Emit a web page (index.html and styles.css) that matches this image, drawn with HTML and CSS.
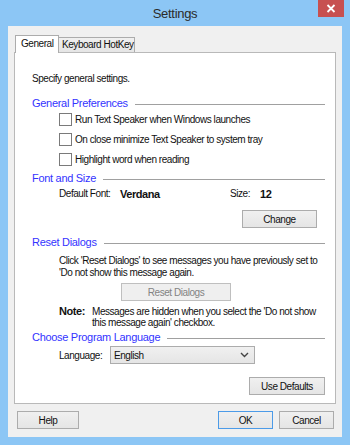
FILE: index.html
```html
<!DOCTYPE html>
<html lang="en">
<head>
    <meta charset="UTF-8">
    <title>Settings</title>
    <link rel="stylesheet" href="styles.css">
</head>
<body>
    <div class="window">
        <div class="titlebar">
            <span class="title">Settings</span>
            <div class="close">
                <svg width="10" height="9" viewBox="0 0 10 9"><path d="M1.5 1 L8.5 8 M8.5 1 L1.5 8" stroke="#fff" stroke-width="1.8" fill="none"/></svg>
            </div>
        </div>

        <div class="client">
            <div class="tabs">
                <div class="tab active">General</div>
                <div class="tab second">Keyboard HotKey</div>
            </div>

            <div class="panel">
                <p class="intro">Specify general settings.</p>

                <div class="group-title g1"><span>General Preferences</span></div>
                <div class="check"><span class="box"></span>Run Text Speaker when Windows launches</div>
                <div class="check"><span class="box"></span>On close minimize Text Speaker to system tray</div>
                <div class="check"><span class="box"></span>Highlight word when reading</div>

                <div class="group-title g2"><span>Font and Size</span></div>
                <div class="font-row">
                    <span class="font-label">Default Font:</span>
                    <span class="font-value">Verdana</span>
                    <span class="size-label">Size:</span>
                    <span class="size-value">12</span>
                </div>
                <div class="right-row change-row">
                    <div class="btn change">Change</div>
                </div>

                <div class="group-title g3"><span>Reset Dialogs</span></div>
                <p class="indent text2">Click 'Reset Dialogs' to see messages you have previously set to<br>'Do not show this message again.</p>
                <div class="btn disabled reset">Reset Dialogs</div>
                <div class="note">
                    <span class="note-label">Note:</span>
                    <span class="note-text">Messages are hidden when you select the 'Do not show<br>this message again' checkbox.</span>
                </div>

                <div class="group-title g4"><span>Choose Program Language</span></div>
                <div class="lang-row">
                    <span class="lang-label">Language:</span>
                    <div class="select">
                        <span>English</span>
                        <svg width="9" height="6" viewBox="0 0 9 6"><path d="M1 1 L4.5 4.5 L8 1" stroke="#444" stroke-width="1.4" fill="none"/></svg>
                    </div>
                </div>
                <div class="right-row defaults-row">
                    <div class="btn defaults">Use Defaults</div>
                </div>
            </div>

            <div class="footer">
                <div class="btn help">Help</div>
                <div class="btn ok">OK</div>
                <div class="btn cancel">Cancel</div>
            </div>
        </div>
    </div>
</body>
</html>
```

FILE: styles.css
```css
* {
    margin: 0;
    padding: 0;
    box-sizing: border-box;
}

body {
    font-family: 'Liberation Sans', Arial, sans-serif;
    font-size: 10px;
    letter-spacing: -0.45px;
    color: #111111;
    background-color: #8cc6f5;
    white-space: nowrap;
}

.window {
    width: 350px;
    height: 445px;
    background-color: #8cc6f5;
    padding: 0 8px 8px 8px;
    display: flex;
    flex-direction: column;
}

.titlebar {
    height: 26px;
    position: relative;
    display: flex;
    align-items: center;
    justify-content: center;
}

.title {
    font-size: 13px;
    letter-spacing: -0.3px;
    color: #2b2b2b;
    margin-top: 1px;
}

.close {
    position: absolute;
    top: 0;
    right: -2px;
    width: 26px;
    height: 17px;
    background-color: #c75050;
    display: flex;
    align-items: center;
    justify-content: center;
}

.client {
    flex: 1;
    background-color: #f0f0f0;
    padding: 9px 6px 0 6px;
    display: flex;
    flex-direction: column;
}

.tabs {
    display: flex;
    align-items: flex-end;
    height: 17px;
    padding-left: 1px;
}

.tab {
    height: 15px;
    border: 1px solid #acacac;
    border-bottom: none;
    background: linear-gradient(#f0f0f0, #e5e5e5);
    line-height: 14px;
    padding-left: 3px;
}

.tab.active {
    width: 44px;
    height: 18px;
    margin-bottom: -1px;
    background: #ffffff;
    padding-left: 5px;
    line-height: 15px;
    position: relative;
    z-index: 1;
}

.tab.second {
    width: 77px;
    margin-left: -1px;
}

.panel {
    height: 352px;
    background-color: #ffffff;
    border: 1px solid #b9b9b9;
    padding: 0 10px 0 17px;
}

.intro {
    margin-top: 19px;
    line-height: 13px;
}

.group-title {
    display: flex;
    align-items: center;
    height: 12px;
    font-size: 11px;
    letter-spacing: -0.3px;
    color: #3333ff;
}

.group-title::after {
    content: "";
    flex: 1;
    height: 1px;
    background-color: #a0a0a0;
    margin-left: 7px;
    margin-top: 2px;
}

.g1 { margin-top: 12px; }
.g2 { margin-top: 3px; }
.g3 { margin-top: 8px; }
.g4 { margin-top: 3px; }

.check {
    height: 20px;
    display: flex;
    align-items: center;
    padding-left: 27px;
}

.box {
    width: 13px;
    height: 13px;
    border: 1px solid #7a7a7a;
    background-color: #ffffff;
    margin-right: 3px;
}

.font-row {
    margin-top: 3px;
    height: 14px;
    line-height: 14px;
    display: flex;
    padding-left: 27px;
}

.font-label { width: 61px; }
.font-value { width: 110px; font-weight: bold; font-size: 11px; }
.size-label { width: 30px; }
.size-value { font-weight: bold; font-size: 11px; }

.right-row {
    display: flex;
    justify-content: flex-end;
}

.change-row {
    margin-top: 9px;
    padding-right: 8px;
}

.btn {
    height: 18px;
    border: 1px solid #acacac;
    background: linear-gradient(#f0f0f0, #e5e5e5);
    display: flex;
    align-items: center;
    justify-content: center;
}

.change { width: 75px; }

.indent {
    padding-left: 27px;
}

.text2 {
    margin-top: 7px;
    line-height: 12px;
}

.btn.disabled {
    border-color: #bfbfbf;
    background: #efefef;
    color: #838383;
}

.reset {
    width: 110px;
    margin-top: 4px;
    margin-left: 89px;
}

.note {
    margin-top: 5px;
    display: flex;
    padding-left: 27px;
    line-height: 11px;
}

.note-label {
    width: 33px;
    font-weight: bold;
    font-size: 11px;
}

.lang-row {
    margin-top: 3px;
    display: flex;
    align-items: center;
    padding-left: 27px;
}

.lang-label { width: 51px; }

.select {
    width: 145px;
    height: 18px;
    border: 1px solid #acacac;
    background: linear-gradient(#f0f0f0, #e5e5e5);
    display: flex;
    align-items: center;
    justify-content: space-between;
    padding: 0 5px 0 3px;
}

.defaults-row {
    margin-top: 13px;
}

.defaults { width: 76px; }

.footer {
    display: flex;
    margin-top: 7px;
    padding: 0 2px 0 3px;
}

.help { width: 62px; margin-right: auto; }
.ok { width: 55px; border-color: #4c9be8; }
.cancel { width: 55px; margin-left: 6px; }
```
